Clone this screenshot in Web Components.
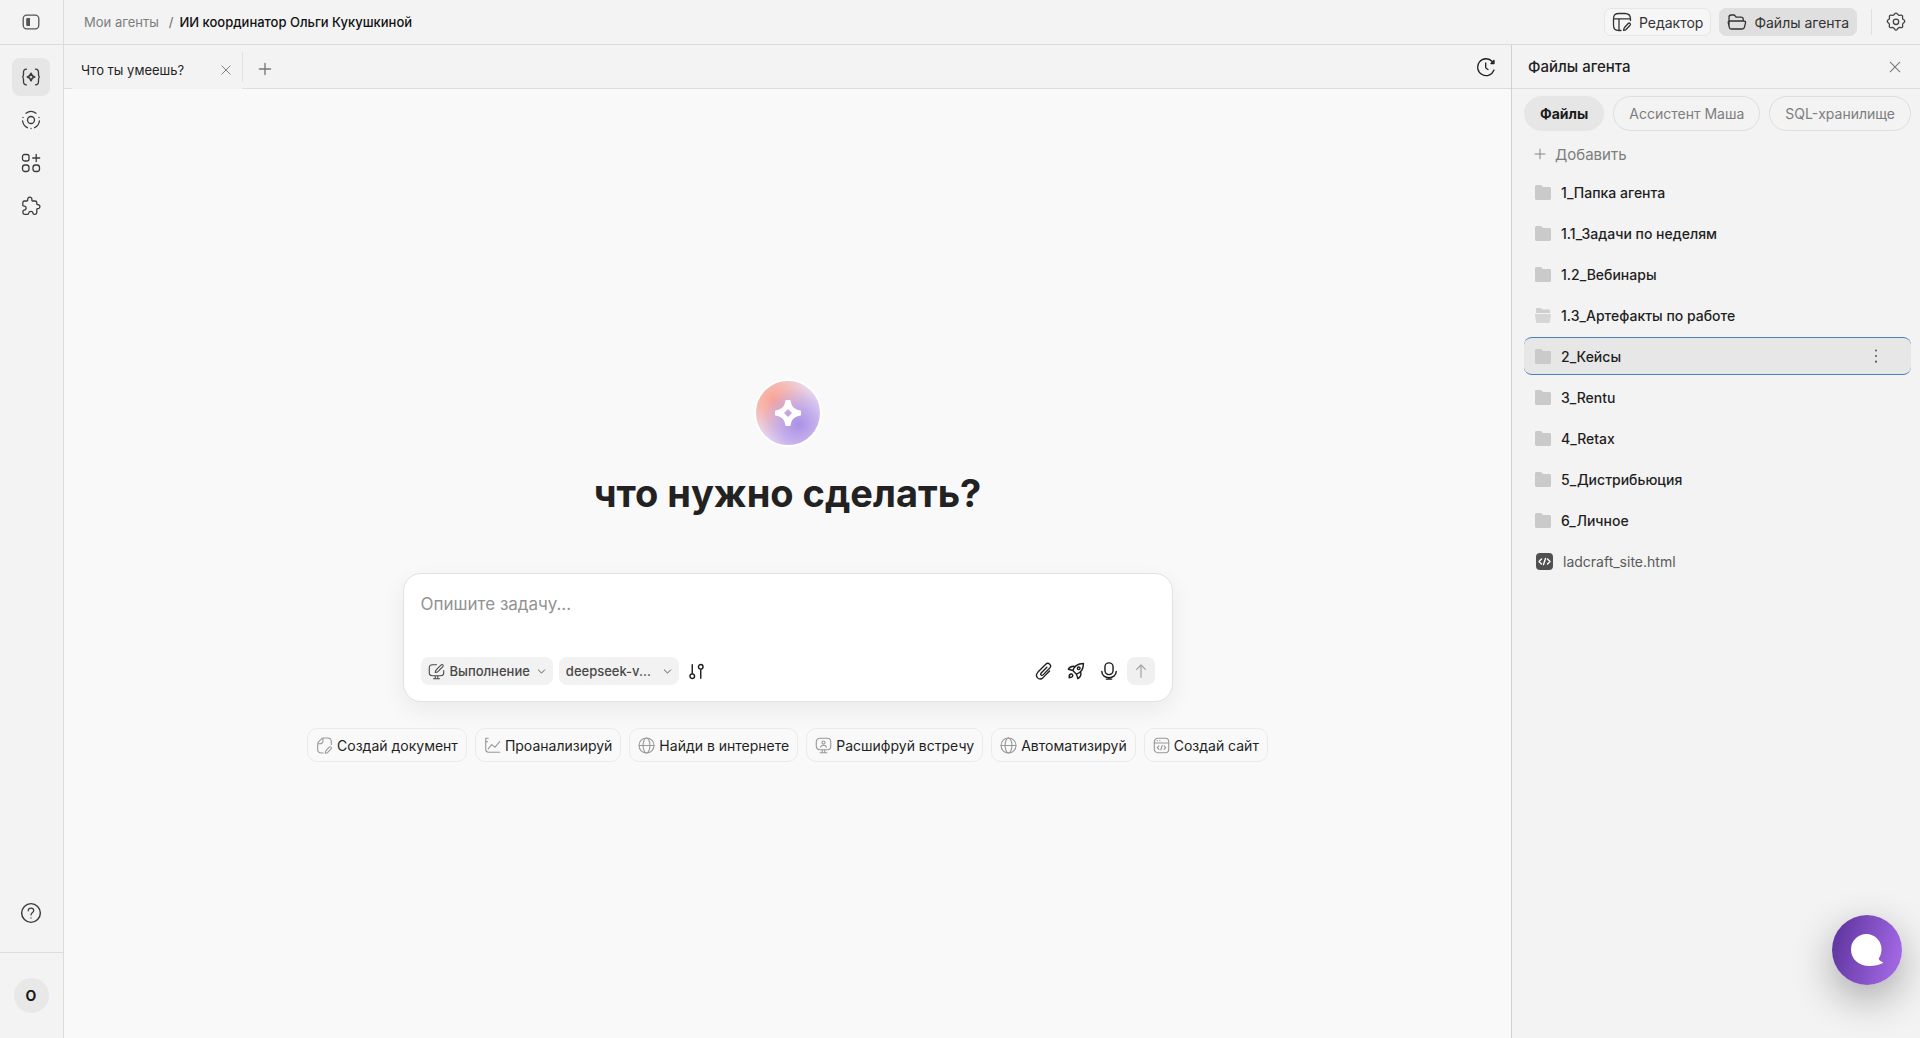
<!DOCTYPE html>
<html lang="ru">
<head>
<meta charset="utf-8">
<meta name="viewport" content="width=device-width, initial-scale=1">
<title>ИИ координатор Ольги Кукушкиной</title>
<style>
    html, body {
        margin: 0;
        height: 100%;
    }

    body {
        font-family: Inter, "Noto Sans", sans-serif;
        font-size: 14px;
        color: #1f1f1f;
        background: #f3f3f3;
        --line: #dcdcdc;
        --muted: #7d7d7d;
        --active: #e6e6e6;
    }
</style>
</head>
<body>
<agent-app></agent-app>

<script>
const ICONS = {
    panel: '<rect x="2.2" y="3.200" width="15.600" height="13.600" rx="3.500"/><path d="M6.500 6H9v8H6.500c-.8 0-1.300-.5-1.300-1.300V7.300C5.200 6.500 5.700 6 6.500 6z" fill="currentColor" stroke="none"/>',
    agent: '<path d="M5.500 2.200C3 2.200 2.500 3.500 2.500 5.500v2c0 1-.3 1.700-.8 2.500.5.800.8 1.500.8 2.500v2c0 2 .5 3.300 3 3.300M14.500 2.200c2.500 0 3 1.300 3 3.300v2c0 1 .3 1.700.8 2.500-.5.800-.8 1.500-.8 2.500v2c0 2-.5 3.300-3 3.300"/><path d="M10 6.300c.6 2.500 1.200 3.100 3.700 3.700-2.500.6-3.100 1.200-3.700 3.700-.6-2.500-1.200-3.100-3.700-3.700 2.500-.6 3.100-1.200 3.700-3.700z" stroke-width="1.600"/>',
    orbit: '<circle cx="10" cy="10" r="3.500"/><path d="M5 3.200a8.500 8.500 0 0 1 10 0M1.600 11a8.500 8.500 0 0 0 4.800 6.700M18.400 11a8.500 8.500 0 0 1-4.800 6.700M2 7.500v.1M18 7.500v.1M10 18.500v.1"/>',
    apps: '<rect x="1.500" y="1.500" width="6.500" height="6.500" rx="2"/><rect x="1.500" y="12" width="6.500" height="6.500" rx="2.500"/><rect x="12" y="12" width="6.500" height="6.500" rx="2.500"/><path d="M15.200 1.500v7M11.700 5h7"/>',
    puzzle: '<path d="M3.500 5h2.300c.8 0 1-.4.9-1.200C6.500 2.200 7.500 1.200 8.800 1.200s2.300 1 2.100 2.600c-.1.800.1 1.200.9 1.200H14c1.200 0 1.800.6 1.800 1.700v1.100c0 .8.3 1 1.100.9 1.200-.1 2 .7 2 1.900s-.8 2.100-2 2c-.8-.1-1.100.2-1.100.9v3c0 1.200-.6 1.800-1.800 1.800h-1c-.8 0-.9-.4-1-1.100-.2-1.200-1-1.900-2.200-1.900s-2 .7-2.100 1.900c-.1.700-.3 1.100-1.100 1.100H3.800c-1.200 0-1.900-.7-1.900-1.900v-1c0-.9.4-1.100 1.200-1.200 1.300-.1 2-1 2-2.100s-.8-2-2-2c-.9 0-1.300-.4-1.300-1.200V6.800C1.800 5.600 2.400 5 3.500 5z"/>',
    help: '<circle cx="10" cy="10" r="8.500"/><path d="M7.500 8c0-1.500 1-2.500 2.500-2.500s2.500 1 2.500 2.300c0 1.700-2.500 1.900-2.500 4M10 14.400v.2" stroke-width="1.100"/>',
    editor: '<path d="M9 18.500H7C3 18.500 1.500 17 1.500 13V7c0-4 1.500-5.500 5.500-5.500h6c4 0 5.500 1.500 5.500 5.500v1.500M1.500 6.800h17M7 6.800v11.700M12.300 15.800l3.900-4.300c1.200-1.200 3 .4 1.900 1.700l-4 4.300c-.5.500-1.200.8-2.500.9.100-1.200.2-2 .7-2.600z"/>',
    folder: '<path d="M2 14.500V5.200C2 3.800 2.800 3 4.200 3h2.500c.8 0 1.200.3 1.500.8l.9 1.400H14c1.500 0 2.200.7 2.200 2.100V9M4.500 17c-1.300 0-2-.7-2.200-1.700l-1-4.500C1 9.500 1.600 9 2.800 9h14c1.400 0 2 .6 1.700 1.900l-1 4.100c-.3 1.300-1 2-2.300 2z"/>',
    gear: '<path d="m8.200 2.500.6-.8c.6-.8 1.800-.8 2.400 0l.8 1c.4.500 1 .7 1.600.6l1.300-.2c1-.1 1.800.6 1.700 1.600l-.1 1.300c0 .6.3 1.200.8 1.500l.8.600c.8.600.8 1.800 0 2.400l-.9.700c-.5.400-.7.900-.7 1.500l.2 1.300c.1 1-.7 1.800-1.700 1.600l-1.300-.2c-.6 0-1.200.2-1.600.7l-.9 1.300c-.6.800-1.800.8-2.400 0l-.9-1.300c-.4-.5-1-.7-1.600-.7l-1.300.2c-1 .2-1.800-.6-1.700-1.600l.2-1.300c0-.6-.2-1.100-.7-1.500l-.9-.7c-.8-.6-.8-1.800 0-2.400l.8-.6c.5-.3.8-.9.800-1.500l-.1-1.300C3.300 3.700 4.100 3 5.100 3.100l1.300.2c.7.100 1.300-.2 1.800-.8z"/><circle cx="10" cy="9.800" r="2.700"/>',
    history: '<path d="M18 13A8.400 8.400 0 1 1 16.300 4.500M9.700 6v4.500c0 .6.300.9 2.300 2M18 3.500v3h-3z"/>',
    close: '<path d="m4 4 12 12M16 4 4 16"/>',
    plus: '<path d="M10 3v14M3 10h14"/>',
    chevron: '<path d="m3 6.500 7 7 7-7"/>',
    dots: '<path d="M10 3v.1M10 10v.1M10 17v.1" stroke-width="2.500"/>',
    mode: '<path d="M10 2H5.500C3 2 1.500 3.200 1.500 5.500v6C1.500 13.800 3 15 5.500 15h9c2.500 0 4-1.200 4-3.500V9M6.500 18.500h7M8.500 15v3.500M11.500 15v3.500M8.500 11.200l.8-2.700 6.200-6.200c1.400-1.300 3.300.6 2 2L11.300 10.500z"/>',
    sliders: '<circle cx="5" cy="15.500" r="2.700"/><circle cx="15" cy="4.500" r="2.700"/><path d="M5 2v10.500M15 7.500V18"/>',
    clip: '<path d="m13.800 5.800-6.300 6.400c-1.400 1.500.6 3.500 2.100 2.100l7.200-7.300c3.200-3.500-1.200-7.400-4.500-4.300l-8.400 8.500c-4.400 4.900 1.300 10.300 5.900 5.900l7-7.100" transform="translate(.5 0)"/>',
    rocket: '<path d="M6.500 9.500C8 4.500 12 1.800 18.300 1.700c-.1 6.300-2.800 10.300-7.800 11.800zM6.500 9.500 1.500 8C3 5.500 5.500 4.300 9 4.900M10.500 13.500l1.500 5c2.800-1.500 4-4.300 3.200-7.500M2.500 17.500c-.3-2 .3-3.800 1.800-4.200 1.700-.3 2.900 1.700 1.500 3-.7.700-1.800.8-3.300 1.200z"/><circle cx="13" cy="7" r="1.500"/>',
    mic: '<rect x="5.500" y="1" width="9" height="13" rx="4.500"/><path d="M2 10.500c0 9.300 16 9.300 16 0M10 17.500V19M7 19h6"/>',
    up: '<path d="M10 18V2.500M4.500 8 10 2.500 15.500 8"/>',
    doc: '<path d="M8.500 18.800H6.500c-3 0-4.500-1.500-4.500-4.500V8.500c0-1.200.4-2.200 1.200-3l3-3C7 1.600 8 1.200 9 1.200h4.500c3 0 4.500 1.500 4.500 4.500v3M2.200 8h2.300C7 8 8.200 6.800 8.200 4.500V1.500M11.800 16l3.700-4c1.500-1.400 3.500.5 2.200 2l-3.800 4c-.7.700-1.500.9-2.900 1 0-1.400.2-2.300.8-3z"/>',
    chart: '<path d="M2 1.500v13c0 2.500 1 3.500 3.500 3.500h13M2 1.500h3M2 5.500h2M5 14l4-5 4 3 5.500-6.500"/>',
    globe: '<circle cx="10" cy="10" r="8.800"/><ellipse cx="10" cy="10" rx="4" ry="8.800"/><path d="M1.200 10h17.600"/>',
    meeting: '<rect x="1.500" y="1.500" width="17" height="13.500" rx="4"/><circle cx="10" cy="6.500" r="1.800"/><path d="M6.500 12c.8-3.300 6.200-3.300 7 0M8.500 15v3.500M11.500 15v3.500M6 18.500h8"/>',
    site: '<rect x="1.500" y="1.500" width="17" height="17" rx="4"/><path d="M1.500 7h17M5 4.300h.1M8 4.300h.1M7 10.500l-2 2 2 2M13 10.500l2 2-2 2M10.800 10l-1.600 5"/>'
};

class UiIcon extends HTMLElement {
    connectedCallback() {
        const size = this.getAttribute('size') || 20;
        const weight = this.getAttribute('weight') || 1.3;
        if (!this.shadowRoot) this.attachShadow({mode: 'open'});
        this.shadowRoot.innerHTML = `
            <style>
                :host { display: block; flex: none; }
                svg { display: block; }
            </style>
            <svg width="${size}" height="${size}" viewBox="0 0 20 20" fill="none" stroke="currentColor"
                stroke-width="${weight}" stroke-linecap="round" stroke-linejoin="round"
                aria-hidden="true">${ICONS[this.getAttribute('name')] || ''}</svg>
        `;
    }
}

customElements.define('ui-icon', UiIcon);

const BUTTON_RESET = `
    button {
        font: inherit;
        color: inherit;
        border: 0;
        margin: 0;
        padding: 0;
        background: none;
        cursor: pointer;
        white-space: nowrap;
    }
`;

class SideBar extends HTMLElement {
    constructor() {
        super();
        this.attachShadow({mode: 'open'});
        this.shadowRoot.innerHTML = `
            <style>
                ${BUTTON_RESET}
                :host {
                    display: flex;
                    flex-direction: column;
                    width: 63px;
                    border-right: 1px solid var(--line);
                    color: #3a3a3a;
                }
                button {
                    display: grid;
                    place-items: center;
                    width: 38px;
                    height: 38px;
                    border-radius: 8px;
                }
                .top, nav, .help, .user { padding-right: 1px; }
                .top {
                    display: grid;
                    place-items: center;
                    height: 44px;
                    border-bottom: 1px solid var(--line);
                }
                .top button { color: #555; }
                nav {
                    display: flex;
                    flex-direction: column;
                    align-items: center;
                    gap: 5px;
                    padding-top: 13px;
                    flex: 1;
                }
                .active { background: var(--active); }
                .help {
                    display: grid;
                    place-items: center;
                    padding-bottom: 20px;
                    border-bottom: 1px solid var(--line);
                }
                .user {
                    display: grid;
                    place-items: center;
                    height: 85px;
                }
                .user button {
                    width: 35px;
                    height: 35px;
                    border-radius: 50%;
                    background: #e8e8e8;
                    color: #1a1a1a;
                    font-weight: 700;
                }
            </style>
            <div class="top"><button aria-label="Свернуть меню"><ui-icon name="panel" size="20"></ui-icon></button></div>
            <nav>
                <button class="active" aria-label="Агенты"><ui-icon name="agent" size="20"></ui-icon></button>
                <button aria-label="Обзор"><ui-icon name="orbit" size="20"></ui-icon></button>
                <button aria-label="Приложения"><ui-icon name="apps" size="20"></ui-icon></button>
                <button aria-label="Плагины"><ui-icon name="puzzle" size="20"></ui-icon></button>
            </nav>
            <div class="help"><button aria-label="Справка"><ui-icon name="help" size="22"></ui-icon></button></div>
            <div class="user"><button>О</button></div>
        `;
    }
}

customElements.define('side-bar', SideBar);

class TopBar extends HTMLElement {
    constructor() {
        super();
        this.attachShadow({mode: 'open'});
        this.shadowRoot.innerHTML = `
            <style>
                ${BUTTON_RESET}
                :host {
                    display: flex;
                    align-items: center;
                    justify-content: space-between;
                    height: 44px;
                    padding: 0 14px 0 20px;
                    border-bottom: 1px solid var(--line);
                }
                nav {
                    display: flex;
                    gap: 6px;
                    font-size: 13px;
                    line-height: 20px;
                }
                nav a {
                    color: var(--muted);
                    text-decoration: none;
                    margin-right: 4px;
                }
                nav span { color: #6a6a6a; }
                nav b { font-weight: 500; color: #111; }
                .actions {
                    display: flex;
                    align-items: center;
                    gap: 8px;
                }
                .action {
                    display: flex;
                    align-items: center;
                    gap: 7px;
                    height: 28px;
                    padding: 0 7px;
                    box-sizing: border-box;
                    border: 1px solid #e6e6e6;
                    border-radius: 7px;
                    background: #f6f6f6;
                    color: #333;
                }
                .action.on {
                    background: #dfdfdf;
                    border-color: #dfdfdf;
                }
                .settings {
                    display: flex;
                    align-items: center;
                    height: 26px;
                    margin-left: 6px;
                    padding-left: 14px;
                    border-left: 1px solid #e0e0e0;
                    color: #444;
                }
            </style>
            <nav aria-label="Путь"><a href="#">Мои агенты</a><span>/</span><b>ИИ координатор Ольги Кукушкиной</b></nav>
            <div class="actions">
                <button class="action"><ui-icon name="editor" size="20"></ui-icon>Редактор</button>
                <button class="action on"><ui-icon name="folder" size="20"></ui-icon>Файлы агента</button>
                <div class="settings"><button aria-label="Настройки"><ui-icon name="gear" size="20"></ui-icon></button></div>
            </div>
        `;
    }
}

customElements.define('top-bar', TopBar);

class TabStrip extends HTMLElement {
    constructor() {
        super();
        this.attachShadow({mode: 'open'});
        this.shadowRoot.innerHTML = `
            <style>
                ${BUTTON_RESET}
                :host {
                    display: flex;
                    height: 44px;
                }
                .start, .rest { border-bottom: 1px solid var(--line); }
                .start { width: 8px; }
                .tab {
                    display: flex;
                    align-items: center;
                    gap: 35px;
                    padding: 6px 9px 0;
                    font-size: 13px;
                }
                .tab ui-icon, .new { color: #777; }
                .rest {
                    display: flex;
                    flex: 1;
                    align-items: center;
                    justify-content: space-between;
                    padding-right: 15px;
                }
                .new {
                    height: 30px;
                    padding: 5px 0 0 14px;
                    border-left: 1px solid #e2e2e2;
                }
            </style>
            <div class="start"></div>
            <div class="tab"><button>Что ты умеешь?</button><button aria-label="Закрыть вкладку"><ui-icon name="close" size="14"></ui-icon></button></div>
            <div class="rest">
                <button class="new" aria-label="Новая вкладка"><ui-icon name="plus" size="16" weight="1.700"></ui-icon></button>
                <button aria-label="История"><ui-icon name="history" size="20"></ui-icon></button>
            </div>
        `;
    }
}

customElements.define('tab-strip', TabStrip);

class AgentOrb extends HTMLElement {
    constructor() {
        super();
        this.attachShadow({mode: 'open'});
        this.shadowRoot.innerHTML = `
            <style>
                :host {
                    display: grid;
                    place-items: center;
                    width: 64px;
                    height: 64px;
                    border: 2px solid #fff;
                    border-radius: 50%;
                    background:
                        radial-gradient(circle at 66% 68%, #ab91e6 0, #b9a2eacc 28%, #cdbdf000 62%),
                        radial-gradient(circle at 28% 30%, #fba393 0, #f8b0a2cc 24%, #f4c8c600 58%),
                        #e9daef;
                }
            </style>
            <svg width="28" height="28" viewBox="0 0 28 28" aria-hidden="true">
                <path fill="#fff" fill-rule="evenodd" d="M12.500 1h3c.8 0 1.200.4 1.300 1.200.4 4.900 4.100 8.600 9 9 .8.1 1.200.5 1.200 1.300v3c0 .8-.4 1.200-1.200 1.300-4.900.4-8.600 4.100-9 9-.1.8-.5 1.200-1.300 1.200h-3c-.8 0-1.200-.4-1.300-1.200-.4-4.900-4.100-8.600-9-9C1.400 16.700 1 16.300 1 15.500v-3c0-.8.4-1.200 1.200-1.300 4.900-.4 8.600-4.100 9-9C11.300 1.400 11.700 1 12.500 1zM14 10l-4 4 4 4 4-4z"/>
            </svg>
        `;
    }
}

customElements.define('agent-orb', AgentOrb);

class TaskComposer extends HTMLElement {
    constructor() {
        super();
        this.attachShadow({mode: 'open'});
        this.shadowRoot.innerHTML = `
            <style>
                ${BUTTON_RESET}
                :host {
                    display: block;
                    box-sizing: border-box;
                    width: 100%;
                    max-width: 770px;
                    padding: 16px 17px;
                    border: 1px solid #e2e2e2;
                    border-radius: 18px;
                    background: #fff;
                    box-shadow: 0 8px 24px #00000010;
                }
                textarea {
                    display: block;
                    box-sizing: border-box;
                    width: 100%;
                    height: 67px;
                    padding: 0;
                    border: 0;
                    outline: 0;
                    resize: none;
                    background: none;
                    font: inherit;
                    font-size: 17px;
                    line-height: 28px;
                }
                textarea::placeholder { color: #929292; opacity: 1; }
                .tools, .group {
                    display: flex;
                    align-items: center;
                }
                .tools { justify-content: space-between; }
                .pick {
                    display: flex;
                    align-items: center;
                    gap: 5px;
                    height: 28px;
                    padding: 0 7px;
                    margin-right: 6px;
                    border-radius: 8px;
                    background: #f2f2f2;
                    color: #484848;
                    font-size: 13px;
                    font-weight: 500;
                }
                .pick ui-icon:last-child { margin: 0 0 0 2px; }
                .model span {
                    width: 90px;
                    overflow: hidden;
                    text-overflow: ellipsis;
                    text-align: left;
                }
                .tune { padding-left: 3px; }
                .right { gap: 15px; }
                .send {
                    display: grid;
                    place-items: center;
                    width: 28px;
                    height: 28px;
                    margin-left: -6px;
                    border-radius: 8px;
                    background: #f0f0f0;
                    color: #a3a3a3;
                }
            </style>
            <textarea placeholder="Опишите задачу..." aria-label="Опишите задачу"></textarea>
            <div class="tools">
                <div class="group">
                    <button class="pick"><ui-icon name="mode" size="17"></ui-icon>Выполнение<ui-icon name="chevron" size="9" weight="2"></ui-icon></button>
                    <button class="pick model"><span>deepseek-v...</span><ui-icon name="chevron" size="9" weight="2"></ui-icon></button>
                    <button class="tune" aria-label="Параметры"><ui-icon name="sliders" size="17" weight="1.700"></ui-icon></button>
                </div>
                <div class="group right">
                    <button aria-label="Прикрепить файл"><ui-icon name="clip" size="18" weight="1.500"></ui-icon></button>
                    <button aria-label="Запуск"><ui-icon name="rocket" size="18" weight="1.600"></ui-icon></button>
                    <button aria-label="Голосовой ввод"><ui-icon name="mic" size="18" weight="1.600"></ui-icon></button>
                    <button class="send" aria-label="Отправить"><ui-icon name="up" size="16" weight="1.500"></ui-icon></button>
                </div>
            </div>
        `;
    }
}

customElements.define('task-composer', TaskComposer);

class PromptChip extends HTMLElement {
    constructor() {
        super();
        this.attachShadow({mode: 'open'});
        this.shadowRoot.innerHTML = `
            <style>
                ${BUTTON_RESET}
                :host { display: block; }
                button {
                    display: flex;
                    align-items: center;
                    gap: 4px;
                    height: 34px;
                    padding: 0 8px;
                    box-sizing: border-box;
                    border: 1px solid #ebebeb;
                    border-radius: 10px;
                }
                ui-icon { color: #999; }
            </style>
            <button><ui-icon name="${this.getAttribute('icon')}" size="17"></ui-icon><slot></slot></button>
        `;
    }
}

customElements.define('prompt-chip', PromptChip);

class StartScreen extends HTMLElement {
    constructor() {
        super();
        this.attachShadow({mode: 'open'});
        this.shadowRoot.innerHTML = `
            <style>
                :host {
                    display: flex;
                    flex: 1;
                    flex-direction: column;
                    align-items: center;
                    justify-content: center;
                    padding: 14px 24px 0;
                    background: #f9f9f9;
                }
                h1 {
                    margin: 22px 0 56px;
                    font-size: 38px;
                    line-height: 48px;
                    font-weight: 700;
                    color: #222;
                }
                .prompts {
                    display: flex;
                    flex-wrap: wrap;
                    justify-content: center;
                    gap: 8px;
                    margin-top: 26px;
                }
            </style>
            <agent-orb></agent-orb>
            <h1>что нужно сделать?</h1>
            <task-composer></task-composer>
            <div class="prompts">
                <prompt-chip icon="doc">Создай документ</prompt-chip>
                <prompt-chip icon="chart">Проанализируй</prompt-chip>
                <prompt-chip icon="globe">Найди в интернете</prompt-chip>
                <prompt-chip icon="meeting">Расшифруй встречу</prompt-chip>
                <prompt-chip icon="globe">Автоматизируй</prompt-chip>
                <prompt-chip icon="site">Создай сайт</prompt-chip>
            </div>
        `;
    }
}

customElements.define('start-screen', StartScreen);

const FILE_ICONS = {
    closed: '<svg width="16" height="15" viewBox="0 0 16 15"><path fill="#cbcacb" d="M0 1.500C0 .6.6 0 1.500 0h4C7 0 7 2 8.500 2h6c.9 0 1.500.6 1.500 1.500v10c0 .9-.6 1.500-1.500 1.500h-13C.6 15 0 14.400 0 13.500z"/></svg>',
    opened: '<svg width="16" height="15" viewBox="0 0 16 15"><path fill="#cfcfcf" d="M1 1.200C1 .5 1.500 0 2.200 0h3C6.700 0 6.700 1.500 8 1.500h5.800c.7 0 1.200.5 1.200 1.200V5H1z"/><path fill="#d6d6d6" d="M0 6h16l-1 8c-.1.600-.5 1-1.200 1H2.200c-.7 0-1.100-.4-1.200-1z"/></svg>',
    html: '<svg width="18" height="18" viewBox="0 0 18 18"><rect x="1" y="1" width="17" height="17" rx="4" fill="#505050"/><path d="M6.500 7 4 9.500 6.500 12M12.500 7 15 9.500 12.500 12M10.500 6.500l-2 6" fill="none" stroke="#fff" stroke-width="1.400" stroke-linecap="round" stroke-linejoin="round"/></svg>'
};

class FileRow extends HTMLElement {
    constructor() {
        super();
        this.attachShadow({mode: 'open'});
        this.shadowRoot.innerHTML = `
            <style>
                ${BUTTON_RESET}
                :host {
                    display: flex;
                    align-items: center;
                    box-sizing: border-box;
                    height: 38px;
                    padding: 0 27px 0 11px;
                    border-radius: 8px;
                    font-weight: 500;
                }
                :host([selected]) {
                    background: #e7e7e7;
                    border: solid #4a7fc0;
                    border-width: 1px 0;
                }
                :host([kind="html"]) { font-weight: 400; color: #5a5a5a; }
                .name {
                    display: flex;
                    flex: 1;
                    align-items: center;
                    gap: 10px;
                }
                svg { display: block; }
                .more { display: none; color: #555; }
                :host([selected]) .more { display: block; }
            </style>
            <button class="name">${FILE_ICONS[this.getAttribute('kind') || 'closed']}<slot></slot></button>
            <button class="more" aria-label="Действия"><ui-icon name="dots" size="16"></ui-icon></button>
        `;
    }
}

customElements.define('file-row', FileRow);

class FilesPanel extends HTMLElement {
    constructor() {
        super();
        this.attachShadow({mode: 'open'});
        this.shadowRoot.innerHTML = `
            <style>
                ${BUTTON_RESET}
                :host {
                    display: block;
                    box-sizing: border-box;
                    width: 409px;
                    border-left: 1px solid #d0d0d0;
                }
                header {
                    display: flex;
                    align-items: center;
                    justify-content: space-between;
                    height: 43px;
                    padding: 0 17px 0 16px;
                    border-bottom: 1px solid var(--line);
                }
                h2 {
                    margin: 0;
                    font-size: 15px;
                    font-weight: 500;
                }
                header button { color: #777; }
                .content { padding: 7px 9px 0 12px; }
                .chips {
                    display: flex;
                    gap: 9px;
                    overflow: hidden;
                }
                .chips button {
                    flex: none;
                    height: 35px;
                    padding: 0 15px;
                    border: 1px solid #dedede;
                    border-radius: 18px;
                    color: var(--muted);
                }
                .chips .on {
                    background: #e6e6e6;
                    border-color: #e6e6e6;
                    color: #1a1a1a;
                    font-weight: 700;
                }
                .add {
                    display: flex;
                    align-items: center;
                    gap: 8px;
                    height: 40px;
                    padding: 6px 9px 0;
                    color: var(--muted);
                    font-size: 15px;
                }
                .list {
                    display: flex;
                    flex-direction: column;
                    gap: 3px;
                    padding-top: 2px;
                }
            </style>
            <header><h2>Файлы агента</h2><button aria-label="Закрыть панель"><ui-icon name="close" size="16"></ui-icon></button></header>
            <div class="content">
                <div class="chips"><button class="on">Файлы</button><button>Ассистент Маша</button><button>SQL-хранилище</button></div>
                <button class="add"><ui-icon name="plus" size="14"></ui-icon>Добавить</button>
                <div class="list"><slot></slot></div>
            </div>
        `;
    }
}

customElements.define('files-panel', FilesPanel);

class ChatButton extends HTMLElement {
    constructor() {
        super();
        this.attachShadow({mode: 'open'});
        this.shadowRoot.innerHTML = `
            <style>
                ${BUTTON_RESET}
                :host {
                    position: fixed;
                    right: 18px;
                    bottom: 53px;
                }
                button {
                    display: grid;
                    place-items: center;
                    width: 70px;
                    height: 70px;
                    border-radius: 50%;
                    background: linear-gradient(105deg, #6338a2 12%, #a268e4 90%);
                    box-shadow: 0 14px 40px #00000050;
                }
            </style>
            <button aria-label="Чат поддержки">
                <svg width="32" height="32" viewBox="0 0 32 32" aria-hidden="true"><path fill="#fff" d="M15.500 0A15.300 15.300 0 0 1 30.500 15c0 4-1 7-2.800 9.700.8 1.700 2 2.700 3.800 3.300.7.300.6.900 0 1.200-3 1.500-8 2.800-13 2.800C7.500 32 0 25 0 15.500A15.500 15.500 0 0 1 15.500 0z"/></svg>
            </button>
        `;
    }
}

customElements.define('chat-button', ChatButton);

class AgentApp extends HTMLElement {
    constructor() {
        super();
        this.attachShadow({mode: 'open'});
        this.shadowRoot.innerHTML = `
            <style>
                :host {
                    display: grid;
                    grid-template-columns: auto 1fr;
                    min-height: 100%;
                }
                .page, main {
                    display: flex;
                    flex-direction: column;
                    min-width: 0;
                }
                .body {
                    display: flex;
                    flex: 1;
                }
                main { flex: 1; }
            </style>
            <side-bar></side-bar>
            <div class="page">
                <top-bar></top-bar>
                <div class="body">
                    <main>
                        <tab-strip></tab-strip>
                        <start-screen></start-screen>
                    </main>
                    <files-panel>
                        <file-row>1_Папка агента</file-row>
                        <file-row>1.1_Задачи по неделям</file-row>
                        <file-row>1.2_Вебинары</file-row>
                        <file-row kind="opened">1.3_Артефакты по работе</file-row>
                        <file-row selected>2_Кейсы</file-row>
                        <file-row>3_Rentu</file-row>
                        <file-row>4_Retax</file-row>
                        <file-row>5_Дистрибьюция</file-row>
                        <file-row>6_Личное</file-row>
                        <file-row kind="html">ladcraft_site.html</file-row>
                    </files-panel>
                </div>
            </div>
            <chat-button></chat-button>
        `;
    }
}

customElements.define('agent-app', AgentApp);
</script>
</body>
</html>
